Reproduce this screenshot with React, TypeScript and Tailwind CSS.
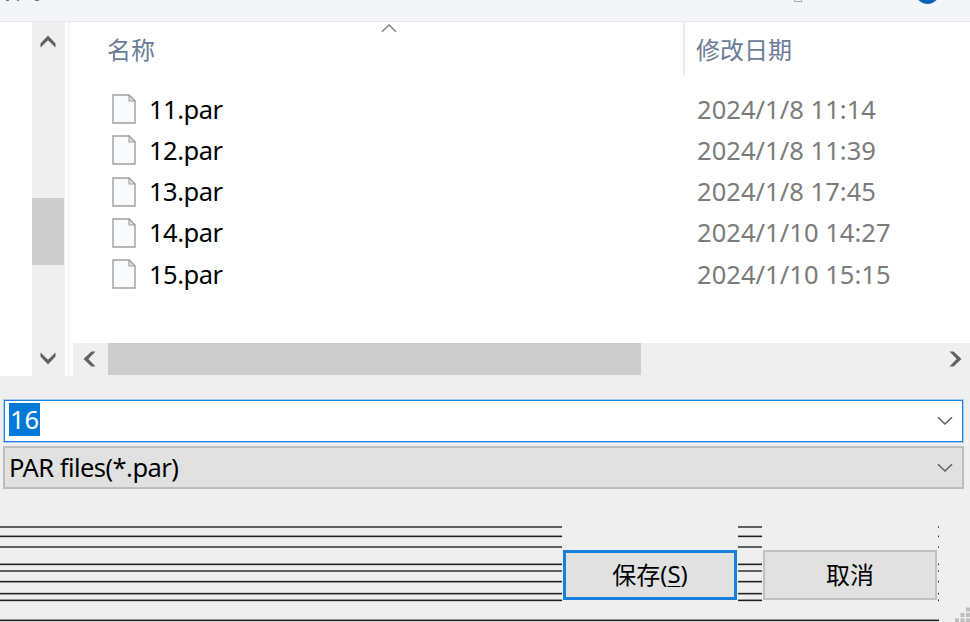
import React from "react";

const files = [
  { name: "11.par", date: "2024/1/8 11:14" },
  { name: "12.par", date: "2024/1/8 11:39" },
  { name: "13.par", date: "2024/1/8 17:45" },
  { name: "14.par", date: "2024/1/10 14:27" },
  { name: "15.par", date: "2024/1/10 15:15" },
];

const latin = "font-['Noto_Sans','Noto_Sans_CJK_SC',sans-serif]";
const cjk = "font-['Noto_Sans_CJK_SC',sans-serif]";

function FileIcon() {
  return (
    <svg width="24" height="30" viewBox="0 0 24 30" className="shrink-0">
      <path d="M1 1H17L23 7V29H1Z" fill="#f9fafb" stroke="#a0a0a0" strokeWidth="1.4" />
      <path d="M17 1V7H23Z" fill="#e4e4e4" stroke="#a0a0a0" strokeWidth="1.1" />
    </svg>
  );
}

/* Thin open chevron used by combo boxes and the sort marker */
function ThinChevron({ up = false, color = "#606060" }: { up?: boolean; color?: string }) {
  return (
    <svg width="16" height="10" viewBox="0 0 16 10" className={up ? "block rotate-180" : "block"}>
      <path d="M1 1.2L8 8L15 1.2" fill="none" stroke={color} strokeWidth="1.6" />
    </svg>
  );
}

function ScrollArrow({ points, width, height }: { points: string; width: number; height: number }) {
  return (
    <svg width={width} height={height} className="block">
      <polygon points={points} fill="#606060" />
    </svg>
  );
}

function Even({ gap }: { gap: string }) {
  return <div className={`h-[2px] shrink-0 bg-[#606060] ${gap}`} />;
}

function TopSoft({ gap }: { gap: string }) {
  return (
    <div className={`shrink-0 ${gap}`}>
      <div className="h-px bg-[#969696]" />
      <div className="h-px bg-[#202020]" />
      <div className="h-px bg-[#d0d0d0]" />
    </div>
  );
}

function BottomSoft({ gap }: { gap: string }) {
  return (
    <div className={`shrink-0 ${gap}`}>
      <div className="h-px bg-[#d0d0d0]" />
      <div className="h-px bg-[#202020]" />
      <div className="h-px bg-[#969696]" />
    </div>
  );
}

function Stripes({ width }: { width: string }) {
  return (
    <div className={`flex h-full shrink-0 flex-col ${width}`}>
      <Even gap="mt-0" />
      <TopSoft gap="mt-[7px]" />
      <Even gap="mt-[8px]" />
      <TopSoft gap="mt-[15px]" />
      <Even gap="mt-[4px]" />
      <BottomSoft gap="mt-[8px]" />
      <BottomSoft gap="mt-[9px]" />
      <TopSoft gap="mt-[4px]" />
    </div>
  );
}

export default function App() {
  return (
    <div className={`relative flex h-[622px] w-[970px] flex-col overflow-hidden bg-[#efefef] text-black ${latin}`}>
      {/* Tool bar, scrolled almost out of view */}
      <div className="relative h-[22px] shrink-0 overflow-hidden border-b border-[#e6e7e8] bg-[#f3f5f8]">
        <span className="absolute left-[6px] top-0 h-px w-[3px] bg-[#667b98]" />
        <span className="absolute left-[17px] top-0 h-px w-[2px] bg-[#667b98]" />
        <span className="absolute left-[35px] top-0 h-px w-[4px] bg-[#667b98]" />
        <span className="absolute left-[794px] top-[-6px] h-[8px] w-[8px] border border-[#a8a8a8]" />
        <span className="absolute left-[915px] top-[-21px] h-[25px] w-[25px] rounded-full bg-[#0861b8]" />
      </div>

      <div className="flex h-[354px] shrink-0 bg-white">
        <div className="ml-[32px] flex w-[33px] shrink-0 flex-col items-start bg-[#efefef]">
          <div className="h-[176px] pl-[8px] pt-[13px]">
            <ScrollArrow width={16} height={13} points="0.5,8.5 8,0.5 15.5,8.5 15.5,12.5 8,5.3 0.5,12.5" />
          </div>
          <div className="h-[67px] w-[32px] bg-[#cdcdcd]" />
          <div className="pl-[8px] pt-[87px]">
            <ScrollArrow width={16} height={13} points="0.5,0.5 8,7.7 15.5,0.5 15.5,4.5 8,12.5 0.5,4.5" />
          </div>
        </div>
        <div className="ml-[2px] w-[3px] shrink-0 bg-[#f7f7f7]" />

        <div className="flex min-w-0 grow flex-col pl-[3px]">
          <div className={`flex h-[54px] shrink-0 text-[24px] leading-[53px] text-[#6a7c96] font-normal ${cjk}`}>
            <div className="flex w-[610px] shrink-0 pl-[34px]">
              <span className="w-[274px]">名称</span>
              <div className="pt-px">
                <ThinChevron up color="#858585" />
              </div>
            </div>
            <div className="border-l-2 border-[#ececec] pl-[11px]">修改日期</div>
          </div>

          <div className="flex h-[267px] shrink-0 flex-col pt-[12.4px]">
            {files.map((f) => (
              <div key={f.name} className="flex h-[41.3px] shrink-0 items-center pl-[39px] text-[25.5px] leading-[41px]">
                <FileIcon />
                <span className="ml-[13px] w-[548px] shrink-0 tracking-[-0.5px]">{f.name}</span>
                <span className="whitespace-nowrap tracking-[0.05px] text-[#7b7b7b]">{f.date}</span>
              </div>
            ))}
          </div>

          <div className="flex h-[33px] shrink-0 bg-[#efefef]">
            <div className="w-[35px] shrink-0 pl-[10px] pt-[8px]">
              <ScrollArrow width={13} height={16} points="8.5,0.5 12.5,0.5 5.3,8 12.5,15.5 8.5,15.5 0.5,8" />
            </div>
            <div className="h-[32px] w-[533px] shrink-0 bg-[#cdcdcd]" />
            <div className="ml-auto pr-[8px] pt-[8px]">
              <ScrollArrow width={13} height={16} points="0.5,0.5 4.5,0.5 12.5,8 4.5,15.5 0.5,15.5 7.7,8" />
            </div>
          </div>
        </div>
      </div>

      <div className="ml-[3px] mt-[23px] flex h-[44px] w-[961px] shrink-0 border border-[#a3cbed] bg-white">
        <div className="flex grow items-center justify-between border border-[#1583df] pl-[4px] pr-[9px] text-[25.5px]">
          <span className="mb-[3px] flex h-[33px] w-[31px] items-center justify-center bg-[#0078d7] leading-[31px] text-white">16</span>
          <ThinChevron />
        </div>
      </div>
      <div className="ml-[3px] mt-[3px] flex h-[43px] w-[961px] shrink-0 items-center justify-between border-2 border-[#bdbdbd] bg-[#e1e1e1] pl-[4px] pr-[9px] text-[25.5px]">
        <span className="tracking-[-0.55px]">PAR files(*.par)</span>
        <ThinChevron />
      </div>

      <div className="mt-[37px] flex h-[76px] shrink-0">
        <Stripes width="w-[562px]" />
        <div className="w-[176px] shrink-0 pl-px pt-[24px]">
          <button className={`flex h-[50px] w-[174px] items-center justify-center border-[3px] border-[#1681dc] bg-[#e1e1e1] pb-[2px] text-[24px] ${cjk}`}>
            <span>保存</span>
            <span className={latin}>(<span className="underline decoration-1 underline-offset-[3px]">S</span>)</span>
          </button>
        </div>
        <Stripes width="w-[24px]" />
        <div className="w-[176px] shrink-0 pl-px pt-[24px]">
          <button className={`flex h-[50px] w-[174px] items-center justify-center border-2 border-[#c0c0c0] bg-[#e1e1e1] pb-[2px] text-[24px] ${cjk}`}>
            取消
          </button>
        </div>
        <Stripes width="w-[1px]" />
      </div>
      <div className="mt-[17px] w-[939px] shrink-0">
        <TopSoft gap="mt-0" />
      </div>

      {/* Resize grip */}
      <svg width="16" height="16" className="absolute bottom-0 right-0" fill="#bfbfbf">
        <rect x="12" y="1.5" width="4" height="4" />
        <rect x="6.5" y="7" width="4" height="4" />
        <rect x="12" y="7" width="4" height="4" />
        <rect x="1" y="12.3" width="4" height="4" />
        <rect x="6.5" y="12.3" width="4" height="4" />
        <rect x="12" y="12.3" width="4" height="4" />
      </svg>
    </div>
  );
}
